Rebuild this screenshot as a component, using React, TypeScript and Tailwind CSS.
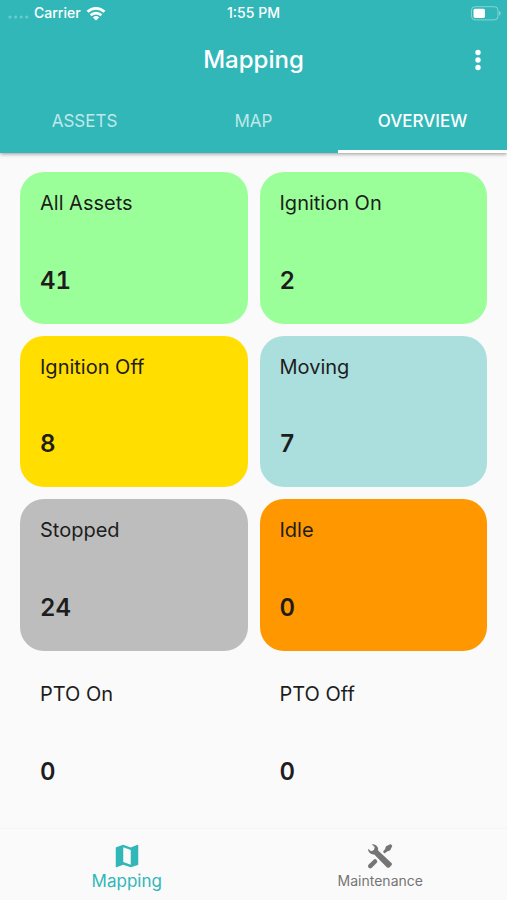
import React from "react";

type Tile = { label: string; value: number; color: string };

const tiles: Tile[] = [
  { label: "All Assets", value: 41, color: "bg-[#9bff99]" },
  { label: "Ignition On", value: 2, color: "bg-[#9bff99]" },
  { label: "Ignition Off", value: 8, color: "bg-[#ffde00]" },
  { label: "Moving", value: 7, color: "bg-[#abdfde]" },
  { label: "Stopped", value: 24, color: "bg-[#bdbdbd]" },
  { label: "Idle", value: 0, color: "bg-[#ff9800]" },
  { label: "PTO On", value: 0, color: "bg-transparent" },
  { label: "PTO Off", value: 0, color: "bg-transparent" },
];

const tabs = ["ASSETS", "MAP", "OVERVIEW"];

function WifiIcon() {
  return (
    <svg viewBox="0 0 20 15" className="h-[15px] w-5" fill="none" stroke="currentColor" aria-hidden="true">
      <path d="M1.600 5.800a12 12 0 0 1 16.800 0" strokeWidth="2.900" />
      <path d="M4.700 9.300a7.500 7.500 0 0 1 10.600 0" strokeWidth="2.700" />
      <path d="M10 14.600 6.900 11.500a4.500 4.500 0 0 1 6.200 0Z" fill="currentColor" stroke="none" />
    </svg>
  );
}

function BatteryIcon() {
  return (
    <svg viewBox="0 0 30 15" className="h-[15px] w-[30px]" aria-hidden="true">
      <rect x="0.5" y="0.7" width="26.5" height="13.2" rx="3.6" fill="none" stroke="#fff" strokeOpacity="0.4" />
      <path d="M28.2 5v4.6c.9-.4 1.4-1.300 1.400-2.300s-.5-1.900-1.400-2.300Z" fill="#fff" fillOpacity="0.45" />
      <rect x="2.500" y="2.700" width="11.500" height="9.200" rx="1.600" fill="#fff" />
    </svg>
  );
}

function StatusBar() {
  return (
    <div className="grid h-[26px] grid-cols-3 items-center text-sm font-medium">
      <div className="flex items-center gap-[5px] pl-2">
        <svg viewBox="0 0 21 4" className="mt-2 h-1 w-[21px]" fill="#fff" fillOpacity="0.28" aria-hidden="true">
          <circle cx="2" cy="2" r="1.600" />
          <circle cx="7.600" cy="2" r="1.600" />
          <circle cx="13.200" cy="2" r="1.600" />
          <circle cx="18.800" cy="2" r="1.600" />
        </svg>
        <span>Carrier</span>
        <WifiIcon />
      </div>
      <span className="text-center">1:55 PM</span>
      <div className="flex justify-end pr-[6px]">
        <BatteryIcon />
      </div>
    </div>
  );
}

function MapIcon() {
  return (
    <svg viewBox="0 0 24 24" className="size-[30px]" fill="currentColor" aria-hidden="true">
      <path d="m20.500 3-.16.03L15 5.100 9 3 3.360 4.900c-.21.07-.36.25-.36.48V20.500c0 .28.22.5.5.5l.16-.03L9 18.900l6 2.100 5.640-1.900c.21-.07.36-.25.36-.48V3.500c0-.28-.22-.5-.5-.5zM15 19l-6-2.110V5l6 2.110V19z" />
    </svg>
  );
}

function ToolsIcon() {
  return (
    <svg viewBox="0 0 24 24" className="size-[30px]" fill="currentColor" aria-hidden="true">
      <path d="M21.200 19.300 19.700 20.900a1.600 1.600 0 0 1-2.300 0L7.400 10.700A4.200 4.200 0 0 1 2.500 6.100L4.900 8.100 7.200 7.200 7.700 4.800 5.500 2.700A4.200 4.200 0 0 1 10.500 7.600L21.200 17.600a1.200 1.200 0 0 1 0 1.700Z" />
      <path d="M8 16.400 4.200 20.100" fill="none" stroke="currentColor" strokeWidth="3.600" strokeLinecap="round" />
      <path
        d="M20.400 3.200 17.200 4.700 16.600 6.800 15.100 8.600 15.700 9.200 17.400 7.900 19.600 7.100 21.200 4Z"
        stroke="currentColor"
        strokeWidth="1.200"
        strokeLinejoin="round"
      />
    </svg>
  );
}

export default function App() {
  return (
    <div className="flex min-h-dvh flex-col bg-[#fafafa] font-[Inter,'Liberation_Sans',sans-serif] text-[#1d1d1d]">
      <header className="bg-[#32b7b9] text-white shadow-[0_1px_4px_rgba(0,0,0,0.4)]">
        <StatusBar />
        <div className="grid h-[67px] grid-cols-[1fr_auto_1fr] items-center">
          <h1 className="col-start-2 text-2xl font-medium">Mapping</h1>
          <button type="button" aria-label="More options" className="mr-[14px] justify-self-end">
            <svg viewBox="0 0 30 30" className="size-[30px]" fill="currentColor" aria-hidden="true">
              <circle cx="15" cy="7.500" r="2.700" />
              <circle cx="15" cy="15" r="2.700" />
              <circle cx="15" cy="22.500" r="2.700" />
            </svg>
          </button>
        </div>
        <nav className="grid h-[60px] grid-cols-3" aria-label="Views">
          {tabs.map((tab) => (
            <button
              key={tab}
              type="button"
              aria-current={tab === "OVERVIEW" ? "page" : undefined}
              className={
                tab === "OVERVIEW"
                  ? "border-b-[3px] border-white text-[17px] font-medium"
                  : "border-b-[3px] border-transparent text-[17px] text-white/70"
              }
            >
              {tab}
            </button>
          ))}
        </nav>
      </header>

      <main className="grid flex-1 grid-cols-2 content-start gap-3 px-5 pt-[19px] pb-3">
        {tiles.map((tile) => (
          <section
            key={tile.label}
            className={`flex aspect-[3/2] flex-col justify-between rounded-3xl px-5 pt-4 pb-6 ${tile.color}`}
          >
            <h2 className="text-xl leading-[30px]">{tile.label}</h2>
            <p className="text-2xl leading-[38px] font-semibold tabular-nums">{tile.value}</p>
          </section>
        ))}
      </main>

      <nav className="grid h-[72px] grid-cols-2 border-t border-[#f5f5f5]" aria-label="Main">
        <button type="button" aria-current="page" className="flex flex-col items-center pt-3 text-[#32b7b9]">
          <MapIcon />
          <span className="text-[17px] leading-5">Mapping</span>
        </button>
        <button type="button" className="flex flex-col items-center pt-3 text-[#757575]">
          <ToolsIcon />
          <span className="text-sm leading-5">Maintenance</span>
        </button>
      </nav>
    </div>
  );
}
